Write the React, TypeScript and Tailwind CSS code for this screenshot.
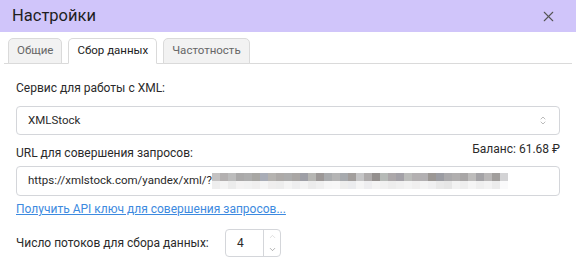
import { X, ChevronUp, ChevronDown } from "lucide-react";

const topRow = [
  "#c4c2c2", "#b3b0b0", "#bcbcbc", "#aaa9a9", "#adadad", "#a7a6a3", "#a9adb7", "#b5b3b0", "#adaaa8",
  "#acacac", "#a9a6a4", "#9e9fa6", "#b6b6b3", "#9c9897", "#a9abad", "#b4b4b4", "#a7aaae", "#a29e9c",
  "#c5c5c6", "#aeabab", "#94908e", "#b6bab7", "#aca8aa", "#a3a1a7", "#bbbcba", "#b3b0b1", "#b2b0b2",
  "#9b9794", "#9b9ca2", "#aaa9ab", "#b0aeae", "#a8a6a6", "#bdbcbb", "#a4a3a6", "#b9b7b7", "#a19e9c",
  "#d3d3d5",
];
const bottomRow = [
  "#eeeeee", "#f4f4f4", "#ececec", "#f4f3f3", "#f2f2f2", "#f0efef", "#f5f5f5", "#efeeee", "#ededed",
  "#f4f4f4", "#eeeeef", "#f3f3f3", "#ececec", "#f0f0f0", "#f6f6f6", "#f7f7f7", "#eeeeed", "#ebecee",
  "#f5f5f5", "#eeeef0", "#f4f4f4", "#f1f1f1", "#ededed", "#f0f0f0", "#f3f3f3", "#f0efef", "#f4f4f4",
  "#f0f0f1", "#e9e9e9", "#e6e6e6", "#f2f2f2", "#eeeeee", "#f5f5f5", "#efefef", "#f3f3f3", "#ececec",
  "#fafafb",
];

function Tab({ label, active }: { label: string; active?: boolean }) {
  return (
    <div
      className={
        "h-[26px] px-[8px] flex items-center rounded-t-[5px] border border-[#dadada] text-[11.5px] -mb-px " +
        (active ? "bg-white border-b-white text-[#222]" : "bg-[#f2f2f2] text-[#666]")
      }
    >
      {label}
    </div>
  );
}

export default function App() {
  return (
    <div className="w-[576px] h-[268px] bg-white overflow-hidden font-['Roboto',sans-serif] text-[#2a2a2a]">
      {/* Header */}
      <div className="h-[32px] bg-[#d0c5fa] flex items-center justify-between pl-[12px] pr-[19px]">
        <span className="text-[16.5px] text-[#1e1e1e]">Настройки</span>
        <X size={17} strokeWidth={1.5} className="text-[#555]" />
      </div>

      {/* Tabs */}
      <div className="mt-[6px] mx-[4px] flex gap-[6px] pl-[4px] border-b border-[#dadada]">
        <Tab label="Общие" />
        <Tab label="Сбор данных" active />
        <Tab label="Частотность" />
      </div>

      {/* Body */}
      <div className="px-[16px] pt-[17px] flex flex-col">
        <div className="text-[12px] leading-[15px]">Сервис для работы с XML:</div>
        <div className="mt-[10px] h-[29px] border border-[#d4d6da] rounded-[4px] flex items-center justify-between pl-[11px] pr-[12px]">
          <span className="text-[11.5px]">XMLStock</span>
          <div className="flex flex-col items-center text-[#999] -space-y-[3px]">
            <ChevronUp size={8} strokeWidth={2} />
            <ChevronDown size={8} strokeWidth={2} />
          </div>
        </div>

        <div className="mt-[7px] flex items-end justify-between">
          <span className="text-[12px] leading-[15px]">URL для совершения запросов:</span>
          <span className="text-[12px] leading-[15px] mb-[4px]">Баланс: 61.68 ₽</span>
        </div>
        <div className="mt-[5px] h-[30px] border border-[#d4d6da] rounded-[4px] flex items-center pl-[11px]">
          <span className="text-[11.5px]">https://xmlstock.com/yandex/xml/?</span>
          <div className="flex flex-col">
            <div className="flex">
              {topRow.map((c, i) => (
                <div key={i} className="w-[8px] h-[8px]" style={{ backgroundColor: c }} />
              ))}
            </div>
            <div className="flex">
              {bottomRow.map((c, i) => (
                <div key={i} className="w-[8px] h-[8px]" style={{ backgroundColor: c }} />
              ))}
            </div>
          </div>
        </div>

        <a href="#" className="mt-[6px] text-[12px] leading-[15px] text-[#3d8ae0] underline self-start">
          Получить API ключ для совершения запросов...
        </a>

        <div className="mt-[12px] flex items-center">
          <span className="text-[12px] w-[209px]">Число потоков для сбора данных:</span>
          <div className="w-[56px] h-[28px] border border-[#d4d6da] rounded-[4px] flex">
            <span className="flex-1 pl-[11px] flex items-center text-[12px]">4</span>
            <div className="w-[17px] border-l border-[#d4d6da] flex flex-col items-center justify-between py-[2px] text-[#777]">
              <ChevronUp size={9} strokeWidth={1.5} className="text-[#c8c8c8]" />
              <ChevronDown size={9} strokeWidth={1.5} />
            </div>
          </div>
        </div>
      </div>
    </div>
  );
}
